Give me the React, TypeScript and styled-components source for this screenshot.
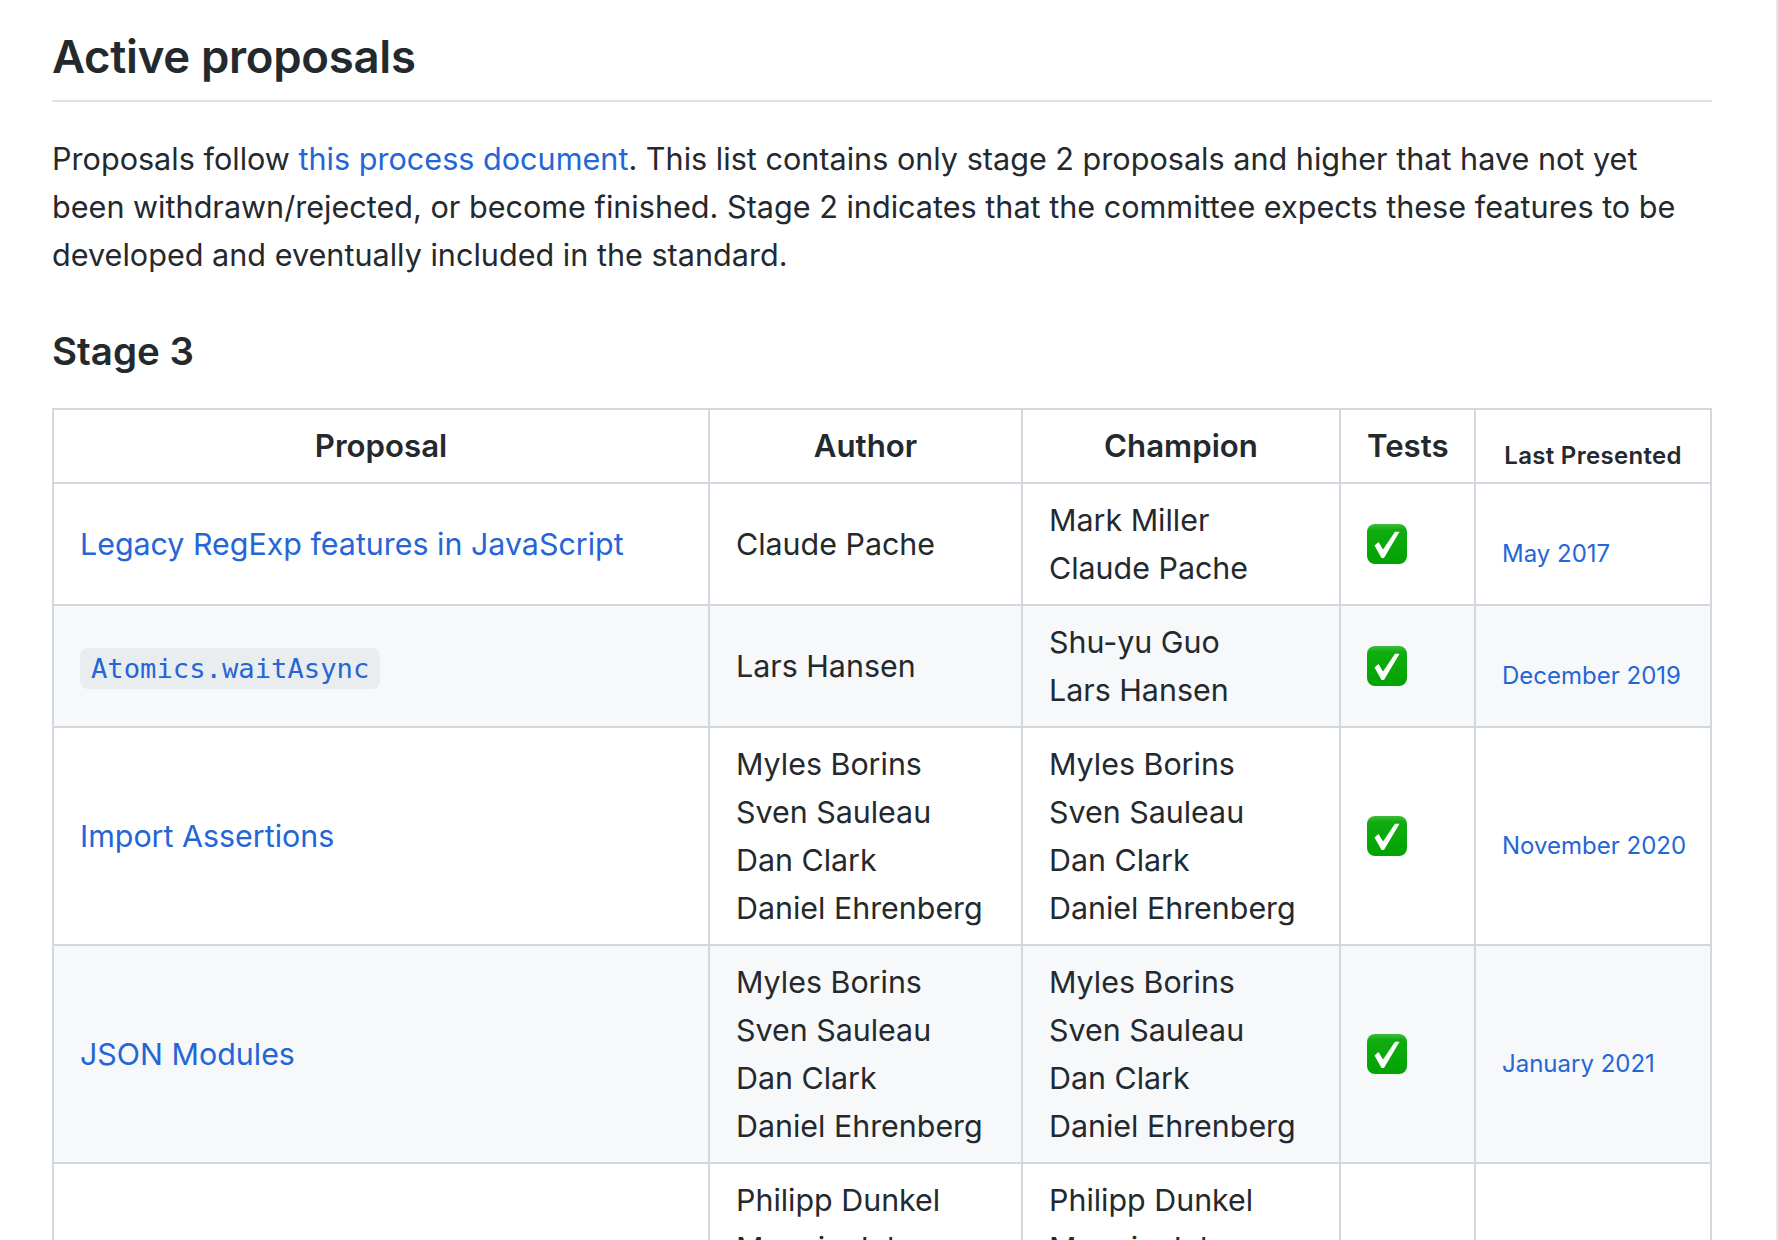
import React from "react";
import styled, { createGlobalStyle } from "styled-components";

const GlobalStyle = createGlobalStyle`
  html, body {
    margin: 0;
    height: 1240px;
    overflow: hidden;
    background: #fff;
  }
  body {
    font-family: Inter, "Liberation Sans", sans-serif;
    font-size: 30.4px;
    line-height: 48px;
    color: #24292e;
  }
`;

const Page = styled.div`
  position: relative;
  height: 1240px;
  overflow: hidden;
  padding: 0 66px 0 52px;
`;

const ScrollEdge = styled.div`
  position: absolute;
  top: 0;
  right: 0;
  width: 2px;
  height: 100%;
  background: #e4e6e9;
`;

const Title = styled.h2`
  margin: 0 0 33px;
  padding: 29px 0 15px;
  border-bottom: 2px solid #dfe2e5;
  font-size: 45.5px;
  line-height: 56px;
  font-weight: 600;
  letter-spacing: -0.3px;
`;

const Intro = styled.p`
  margin: 0 0 50px;
  font-size: 30.6px;
`;

const SectionTitle = styled.h3`
  margin: 0 0 34px;
  font-size: 38.5px;
  line-height: 45px;
  font-weight: 600;
`;

const Link = styled.a`
  color: #2566d6;
  text-decoration: none;
`;

const Table = styled.table`
  width: 1658px;
  table-layout: fixed;
  border-collapse: collapse;
`;

const HeadCell = styled.th<{ $width: number }>`
  box-sizing: border-box;
  width: ${({ $width }) => $width}px;
  padding: 12px 26px;
  border: 2px solid #d3d8de;
  font-size: 31.2px;
  font-weight: 600;
  text-align: center;
  white-space: nowrap;
`;

const Row = styled.tr<{ $alt: boolean }>`
  background: ${({ $alt }) => ($alt ? "#f6f8fa" : "#fff")};
`;

const Cell = styled.td`
  padding: 12px 26px;
  border: 2px solid #d3d8de;
  vertical-align: middle;
`;

const NameLine = styled.div``;

const Code = styled.code`
  display: inline-block;
  padding: 0 11px;
  border-radius: 8px;
  background: rgba(27, 31, 35, 0.05);
  color: #2566d6;
  font-family: "DejaVu Sans Mono", monospace;
  font-size: 27.2px;
  line-height: 41px;
  vertical-align: -1px;
`;

const Small = styled.sub<{ $head?: boolean }>`
  font-size: 24px;
  line-height: 0;
  vertical-align: -7px;
  white-space: nowrap;
  letter-spacing: ${({ $head }) => ($head ? "0.3px" : "0")};
`;

const Check = () => (
  <svg width="40" height="40" viewBox="0 0 40 40" style={{ display: "block" }}>
    <defs>
      <linearGradient id="checkFill" x1="0" y1="0" x2="0" y2="1">
        <stop offset="0" stopColor="#3fbb3a" />
        <stop offset="0.15" stopColor="#10ad10" />
        <stop offset="1" stopColor="#02a202" />
      </linearGradient>
    </defs>
    <rect width="40" height="40" rx="8" fill="url(#checkFill)" />
    <path d="M7.500 21.500l4-3.500 4.500 7.500L28 7.700h4.500L17 34h-2.500z" fill="#fff" />
  </svg>
);

const myles = ["Myles Borins", "Sven Sauleau", "Dan Clark", "Daniel Ehrenberg"];
const temporal = [
  "Philipp Dunkel",
  "Maggie Johnson-Pint",
  "Matt Johnson-Pint",
  "Brian Terlson",
  "Shane Carr",
  "Ujjwal Sharma",
  "Philip Chimento",
  "Jason Williams",
  "Justin Grant",
];

interface Proposal {
  name: React.ReactNode;
  authors: string[];
  champions: string[];
  tested: boolean;
  presented: string;
}

const proposals: Proposal[] = [
  {
    name: <Link>Legacy RegExp features in JavaScript</Link>,
    authors: ["Claude Pache"],
    champions: ["Mark Miller", "Claude Pache"],
    tested: true,
    presented: "May 2017",
  },
  {
    name: <Code>Atomics.waitAsync</Code>,
    authors: ["Lars Hansen"],
    champions: ["Shu-yu Guo", "Lars Hansen"],
    tested: true,
    presented: "December 2019",
  },
  {
    name: <Link>Import Assertions</Link>,
    authors: myles,
    champions: myles,
    tested: true,
    presented: "November 2020",
  },
  {
    name: <Link>JSON Modules</Link>,
    authors: myles,
    champions: myles,
    tested: true,
    presented: "January 2021",
  },
  {
    name: <Link>Temporal</Link>,
    authors: temporal,
    champions: temporal,
    tested: false,
    presented: "March 2021",
  },
];

const columns = [
  { label: "Proposal", width: 656 },
  { label: "Author", width: 313 },
  { label: "Champion", width: 318 },
  { label: "Tests", width: 135 },
];

export default function App() {
  return (
    <Page>
      <GlobalStyle />
      <Title>Active proposals</Title>
      <Intro>
        Proposals follow <Link>this process document</Link>. This list contains only stage 2
        proposals and higher that have not yet been withdrawn/rejected, or become finished.
        Stage 2 indicates that the committee expects these features to be developed and
        eventually included in the standard.
      </Intro>
      <SectionTitle>Stage 3</SectionTitle>
      <Table>
        <thead>
          <tr>
            {columns.map(({ label, width }) => (
              <HeadCell key={label} $width={width}>
                {label}
              </HeadCell>
            ))}
            <HeadCell $width={236}>
              <Small $head>Last Presented</Small>
            </HeadCell>
          </tr>
        </thead>
        <tbody>
          {proposals.map((p, index) => (
            <Row key={p.presented} $alt={index % 2 === 1}>
              <Cell>{p.name}</Cell>
              <Cell>
                {p.authors.map((name) => (
                  <NameLine key={name}>{name}</NameLine>
                ))}
              </Cell>
              <Cell>
                {p.champions.map((name) => (
                  <NameLine key={name}>{name}</NameLine>
                ))}
              </Cell>
              <Cell>{p.tested && <Check />}</Cell>
              <Cell>
                <Small>
                  <Link>{p.presented}</Link>
                </Small>
              </Cell>
            </Row>
          ))}
        </tbody>
      </Table>
      <ScrollEdge />
    </Page>
  );
}
